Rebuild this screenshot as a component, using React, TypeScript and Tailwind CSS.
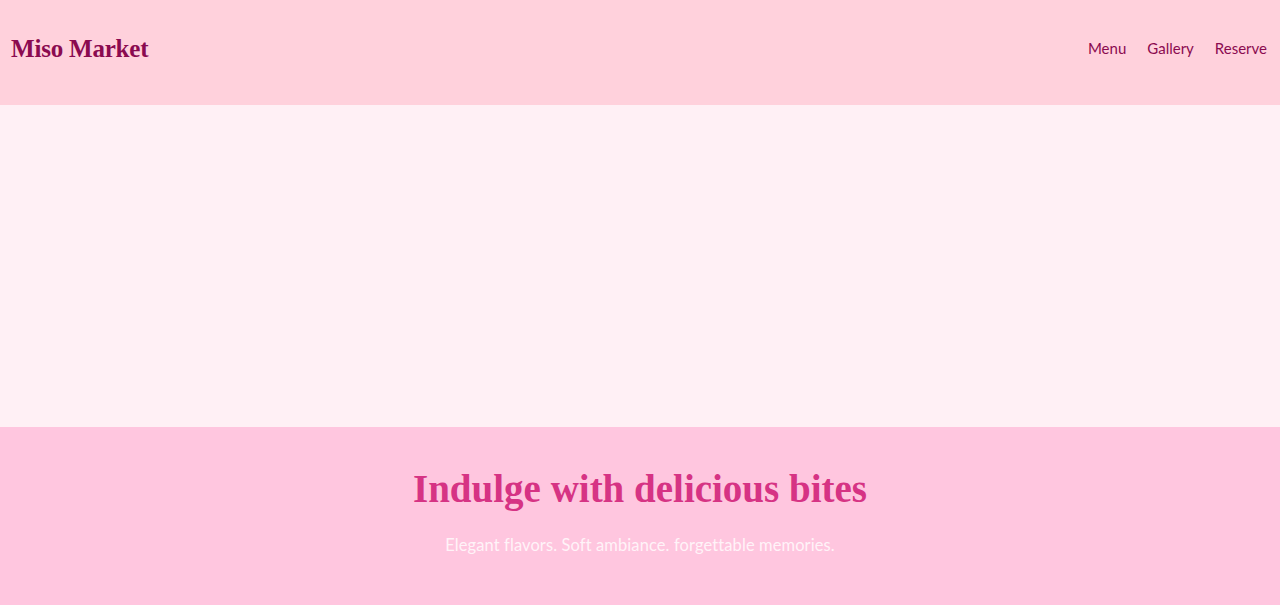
const serif = "font-['Liberation_Serif','DejaVu_Serif',serif]";
const sans = "font-['Lato','Noto_Sans',sans-serif]";

const App = () => {
    return (
        <div className="flex flex-col w-screen min-h-screen bg-[#ffc6df]">
            {/* HEADER */}
            <header className="flex flex-row items-center justify-between h-[105px] pl-[11px] pr-[13px] pb-[8px] bg-[#ffd1dc]">
                <h1 className={`${serif} text-[25px] font-bold text-[#8b0a50] tracking-[-0.2px]`}>Miso Market</h1>
                <nav className={`${sans} flex flex-row gap-[21px] text-[15px] text-[#8b0a50]`}>
                    <a href="#">Menu</a>
                    <a href="#">Gallery</a>
                    <a href="#">Reserve</a>
                </nav>
            </header>

            {/* HERO SPACE */}
            <section className="h-[322px] bg-[#fff0f5]"></section>

            {/* TAGLINE */}
            <section className="flex flex-col items-center pt-[40px] pb-[40px] bg-[#ffc6df]">
                <h2 className={`${serif} text-[39px] font-bold text-[#d63384] leading-[44px]`}>Indulge with delicious bites</h2>
                <p className={`${sans} mt-[22px] text-[16.5px] tracking-[0.1px] text-[#fff3f8]`}>Elegant flavors. Soft ambiance. forgettable memories.</p>
            </section>
        </div>
    );
}

export default App;
